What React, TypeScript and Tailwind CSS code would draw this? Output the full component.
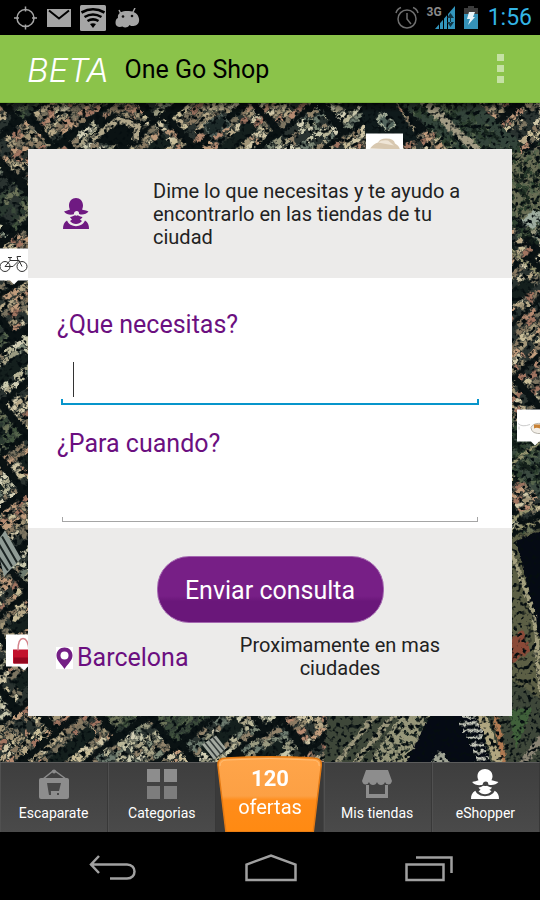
import React from "react";

const LABEL = "text-[25px] leading-[30px] text-[#6b0f80]";

function seeded(seed: number) {
  let s = seed;
  return () => {
    s = (s * 1664525 + 1013904223) % 4294967296;
    return s / 4294967296;
  };
}

const WARM = ["#b8a988", "#a39678", "#c9bd98", "#b58a70", "#c09c7c", "#8a7a62", "#d0c6a6", "#a07460", "#7c7460"];
const PALE = ["#b9b698", "#9a9a80", "#c9c8ac", "#7f8a78", "#a8a286", "#d2ceb4", "#6c7a6e", "#90826a"];
const PARK = ["#3a4a3a", "#56654c", "#2b3a30", "#6c7358", "#44563f"];

type Plot = { x: number; y: number; w: number; h: number; fill: string };
type Block = { x: number; y: number; w: number; h: number; turn: number; court: boolean; plots: Plot[] };

// City blocks: rows of roofs around dark courtyards, split by dark streets.
function buildBlocks(): Block[] {
  const rnd = seeded(41);
  const blocks: Block[] = [];
  for (let by = -480; by < 480; by += 42) {
    let bx = -480 - Math.floor(rnd() * 30);
    while (bx < 480) {
      const w = 32 + Math.floor(rnd() * 50);
      const h = 36;
      const kind = rnd();
      const colors = kind < 0.08 ? PARK : kind < 0.45 ? PALE : WARM;
      const plots: Plot[] = [];
      for (let y = by; y < by + h; y += 6) {
        let x = bx;
        while (x < bx + w) {
          const pw = 4 + Math.floor(rnd() * 8);
          if (rnd() > 0.12) {
            plots.push({ x, y: y + Math.round(rnd()), w: Math.min(pw, bx + w - x), h: 5, fill: colors[Math.floor(rnd() * colors.length)] });
          }
          x += pw + 1;
        }
      }
      blocks.push({ x: bx, y: by, w, h, turn: Math.round((rnd() - 0.5) * 14), court: w > 44 && rnd() > 0.4, plots });
      bx += w + 8;
    }
  }
  return blocks;
}

const BLOCKS = buildBlocks();

function buildTrees() {
  const rnd = seeded(5);
  return Array.from({ length: 640 }, () => ({ t: rnd(), o: rnd(), r: 1 + rnd() * 2, c: Math.floor(rnd() * 4) }));
}
const TREES = buildTrees();
const GREENS = ["#14201a", "#2f4230", "#56654c", "#1d2c22"];

function SatelliteMap() {
  return (
    <svg className="absolute inset-0 h-full w-full" viewBox="0 0 540 660" preserveAspectRatio="xMidYMid slice" aria-hidden="true">
      <defs>
        <filter id="grain" x="0" y="0" width="100%" height="100%" colorInterpolationFilters="sRGB">
          <feTurbulence type="fractalNoise" baseFrequency="0.22" numOctaves="2" seed="8" result="n" />
          <feDisplacementMap in="SourceGraphic" in2="n" scale="7" xChannelSelector="R" yChannelSelector="G" result="d" />
          <feGaussianBlur in="d" stdDeviation="0.4" result="soft" />
          <feColorMatrix in="n" type="matrix" values="0 0 0 0 0.02  0 0 0 0 0.05  0 0 0 0 0.06  4 0 4 0 -4.1" result="dark" />
          <feMerge>
            <feMergeNode in="soft" />
            <feMergeNode in="dark" />
          </feMerge>
        </filter>
        <linearGradient id="topshade" x1="0" y1="0" x2="0" y2="1">
          <stop offset="0" stopColor="#000" stopOpacity="0.6" />
          <stop offset="1" stopColor="#000" stopOpacity="0" />
        </linearGradient>
      </defs>
      <rect width="540" height="660" fill="#0a1213" />
      <g filter="url(#grain)">
        <rect x="-10" y="-10" width="560" height="680" fill="#0a1213" />
        <g transform="translate(270 330) rotate(-38)">
          {BLOCKS.map((b, i) => (
            <g key={i} transform={`rotate(${b.turn} ${b.x + b.w / 2} ${b.y + b.h / 2})`}>
              <rect x={b.x} y={b.y} width={b.w} height={b.h} fill="#2a3330" />
              {b.plots.map((p, j) => (
                <rect key={j} x={p.x} y={p.y} width={p.w} height={p.h} fill={p.fill} />
              ))}
              {b.court && <rect x={b.x + 10} y={b.y + 12} width={b.w - 21} height={b.h - 23} fill="#141f1d" />}
            </g>
          ))}
        </g>
        {/* courtyard building and blank plots along the top */}
        <path d="M84 40 L112 10 L144 20 L142 44 Z" fill="#0a1213" />
        <path d="M92 37 L118 17 L138 24 L134 38" fill="none" stroke="#b0a689" strokeWidth="6" />
        <path d="M358 -4 L392 -4 L420 40 L366 34 Z" fill="#0f1a1b" />
        <path d="M376 16 L384 11 L396 22 L386 28 Z" fill="#52645c" stroke="#a7b09a" strokeWidth="2" />
        <path d="M204 22 L222 12 L230 22 L210 34 Z" fill="#1c2928" stroke="#53605a" strokeWidth="2" />
        {/* boulevard */}
        <path d="M386 -10 L480 68 L520 68 L520 40 L466 -10 Z" fill="#33443a" />
        {TREES.slice(0, 300).map((t, i) => (
          <circle key={i} cx={386 + t.t * 84 + t.o * 64} cy={-14 + t.t * 84} r={t.r} fill={GREENS[t.c]} />
        ))}
        <path d="M416 -8 L492 62" stroke="#a39c84" strokeWidth="8" />
        {/* park on the right edge */}
        <path d="M506 50 L544 50 L544 130 L506 110 Z" fill="#6a6e55" />
        <path d="M506 340 L544 310 L544 400 L506 360 Z" fill="#3b4a40" />
        {TREES.slice(300).map((t, i) => (
          <circle key={i} cx={508 + t.o * 34} cy={t.t < 0.5 ? 40 + t.t * 200 : 240 + t.t * 140} r={t.r} fill={GREENS[t.c]} />
        ))}
        <path d="M520 118 l14 -10 l12 6 l-14 12 Z" fill="#9dab9e" />
        <path d="M506 144 l40 34 M506 366 l38 -30 M506 420 l40 -22 M506 430 l40 -14" stroke="#96946f" strokeWidth="3" />
        {/* harbour */}
        <path d="M508 434 L546 426 L546 670 L506 670 Z" fill="#5c5f45" />
        <path d="M516 438 L546 426 L546 560 Z" fill="#050a14" />
        <path d="M510 446 L534 512 L540 590" fill="none" stroke="#a39f7e" strokeWidth="4" />
        <path d="M506 540 l16 -12 l8 20 l-20 14 Z" fill="#8a4a38" />
        <path d="M322 670 L330 600 L500 570 L546 600 L546 670 Z" fill="#3e4739" />
        <path d="M330 668 L386 600 M348 668 L404 600" stroke="#99957a" strokeWidth="5" />
        <path d="M364 668 L408 600 L440 600 L402 668 Z" fill="#97977a" />
        <path d="M374 660 l36 -50 M384 662 l38 -52 M394 664 l36 -52" stroke="#1a2722" strokeWidth="4" strokeDasharray="4 5" />
        <path d="M402 668 L438 596 L474 596 L492 668 Z" fill="#050a14" />
        <path d="M462 614 h14 M459 621 h20 M463 628 h18 M467 635 h16 M470 642 h15 M473 649 h14 M475 656 h14" stroke="#c6c8ba" strokeWidth="3" />
        <path d="M430 664 l4 -12 l7 -3 l8 10 v6 Z" fill="#a0a494" />
        <path d="M478 606 L502 668" stroke="#b0a680" strokeWidth="9" />
        <path d="M494 606 L506 668" stroke="#b07a52" strokeWidth="5" />
        <path d="M508 606 h24 l-16 40 Z" fill="#40603a" />
        <path d="M516 668 L546 630" stroke="#8a8474" strokeWidth="7" />
      </g>
      {/* corrugated roofs */}
      <path d="M-4 440 L5 428 L21 456 L4 474 Z" fill="#8f9b95" />
      <path d="M-4 450 L8 468 M-2 440 L12 464 M2 434 L17 460" stroke="#1a2322" strokeWidth="2" />
      <path d="M202 642 L216 633 L226 646 L214 657 Z" fill="#a3a9a0" />
      <path d="M205 640 l12 15 M209 637 l12 15 M213 635 l11 13" stroke="#343b3a" strokeWidth="1.5" />
      <rect width="540" height="10" fill="url(#topshade)" />
      {/* shop pins */}
      <g>
        <path d="M366 31 h37 v32 h-37 Z" fill="#fff" />
        <path d="M370 46 q4 -5 8 -6 q2 -4 8 -4 q8 0 9 5 q4 2 5 6 Z" fill="#d8c8b0" />
        <path d="M378 40 q4 -3 10 -2 l6 5" fill="#efe5d6" />
        <path d="M0 146 h34 v32 h-16 l-4 4 -4 -4 h-10 Z" fill="#fff" />
        <g fill="none" stroke="#333" strokeWidth="1">
          <circle cx="5" cy="164" r="5" />
          <circle cx="22" cy="164" r="5" />
          <path d="M5 164 L10 158 H19 L13 164 Z M19 158 L22 164 M8 155 h4 M10 158 v-3 M18 158 l-1 -4 h4" />
        </g>
        <path d="M517 307 h30 v32 h-8 l-4 4 -4 -4 h-14 Z" fill="#fff" />
        <path d="M518 321 q4 4 12 1 M519 324 v3" fill="none" stroke="#ccc" strokeWidth="1" />
        <path d="M531 325 q0 7 12 6 v-10 q-10 -1 -12 4" fill="#f3efe8" stroke="#b9b5ac" strokeWidth="1" />
        <path d="M534 322 h8 v5 q-5 -3 -8 -1 Z" fill="#c98235" />
        <path d="M6 532 h30 v32 h-8 l-4 4 -4 -4 h-14 Z" fill="#fff" />
        <path d="M13 547 h20 v14 h-20 Z" fill="#c3132d" />
        <path d="M14 555 h18 v6 h-18 Z" fill="#94071f" />
        <path d="M18 548 q0 -12 5 -12 t6 12" fill="none" stroke="#d4848c" strokeWidth="1.5" />
      </g>
    </svg>
  );
}

function StatusBar() {
  return (
    <div className="flex h-[35px] items-center justify-between bg-black pl-3.5 pr-2">
      <div className="flex items-center gap-[9px] text-[#a5a5a5]">
        <svg width="24" height="24" viewBox="0 0 24 24" fill="none" stroke="currentColor" strokeWidth="1.5">
          <circle cx="11.5" cy="12" r="8.5" />
          <path d="M11.5 0.5v5M11.5 18.5v5M0 12h5M18 12h5" />
        </svg>
        <svg width="24" height="18" viewBox="0 0 24 18">
          <path d="M0 0h24v18H0z" fill="currentColor" />
          <path d="M2 1.5l10 8 10-8" fill="none" stroke="#000" strokeWidth="2" />
        </svg>
        <svg width="26" height="26" viewBox="0 0 26 26">
          <rect width="26" height="26" rx="1.5" fill="currentColor" />
          <g fill="none" stroke="#000" strokeWidth="2.6">
            <path d="M1.500 7.500q11.500-6.500 23 0M4.500 12q8.500-5 17 0M7.500 16q5.500-3.200 11 0" />
          </g>
          <path d="M10 19q3-1.600 6 0l-3 4z" fill="#000" />
        </svg>
        <svg width="25" height="20" viewBox="0 0 25 20">
          <path d="M4 2l2 4M20 0l-2 4" stroke="currentColor" strokeWidth="1.5" />
          <path d="M3 10C2 5 7 3 12 3s10 1 11.500 6c2 5-1 9-5 9-2 0-3 0-4-1-2 3-5 3-7 1.500-3 1-7 .5-7-3.500 0-3 1-4.500 2.500-5z" fill="currentColor" />
          <circle cx="8" cy="8.500" r="1.300" fill="#111" />
          <circle cx="17" cy="8" r="1.300" fill="#111" />
        </svg>
      </div>
      <div className="flex items-center">
        <svg width="24" height="24" viewBox="0 0 24 24" fill="none" stroke="#6f6f6f" strokeWidth="1.500">
          <circle cx="12" cy="13" r="9" />
          <path d="M12 7v6l4 5M1 7q1-4 5-5.500M23 7q-1-4-5-5.500" />
        </svg>
        <span className="ml-2 mb-3 font-['Roboto'] text-[12px] leading-[12px] font-bold text-[#8a8a8a]">3G</span>
        <svg className="-ml-2" width="22" height="23" viewBox="0 0 22 23">
          <path d="M1 23L21 0v23z" fill="#3295bd" />
          <path d="M5.500 14v9M9.500 10v13M13.500 6v17" stroke="#000" strokeWidth="1" />
          <path d="M16.500 7l3.500 5h-7zM16.500 21l3.500-5h-7zM16 11h1v6h-1z" fill="#123645" />
        </svg>
        <svg className="ml-2" width="14" height="23" viewBox="0 0 14 23">
          <path d="M4 0h6v2h4v6H0V2h4z" fill="#3c3c3c" />
          <path d="M0 8h14v15H0z" fill="#3592b8" />
          <path d="M5 6h6L9 11h2l-7 8 2-6H3z" fill="#e8f4f9" />
        </svg>
        <span className="ml-2.5 text-[23px] leading-[30px] text-[#33b5e5]">1:56</span>
      </div>
    </div>
  );
}

function ShopperIcon({ className }: { className: string }) {
  return (
    <svg className={className} viewBox="0 0 26 31" preserveAspectRatio="none" fill="currentColor" aria-hidden="true">
      <path d="M6 7.500C6 3 9 0 13 0s7 3 7 7.500c0 1.500-.5 3-1 4 1.500.5 4 1 6.500 2-2 2.500-6 4-9.500 2.500.5-3-2.500-4-4.500-2-1 1.500 0 2.500-1.500 2.500C7 17 3 16.500 1 13.500c2.500-1 4-1 6-2-.6-1-1-2.500-1-4z" />
      <path d="M7 19c2-.2 3.500-1.500 5-1.800 1 .6 2 .6 2.800 0 1.200.5 2.700 1.500 4.700 1.800-.5 1.200-1.500 2-2.500 2.400l2 1.600c-3 4-9 4-12 0l2-1.600C8.500 21 7.500 20.200 7 19z" />
      <path d="M0 31c0-4 1-6.500 4-8.500 3 7.500 15 7.500 18 0 3 2 4 4.500 4 8.500z" />
    </svg>
  );
}

function Tab({ label, active, children }: { label: string; active?: boolean; children: React.ReactNode }) {
  return (
    <button
      type="button"
      className="flex flex-1 basis-0 flex-col items-center gap-0.5 border-r border-t border-r-[#383838] border-t-[#5c5c5c] bg-linear-to-b from-[#3e3e3e] to-[#4a4a4a] pt-1 shadow-[inset_1px_0_0_#505050]"
    >
      <span className={active ? "flex h-8 items-center pt-0.5 text-white" : "flex h-8 items-center pt-0.5 text-[#8d8d8d]"}>{children}</span>
      <span className="text-[14px] leading-[24px] whitespace-nowrap text-white">{label}</span>
    </button>
  );
}

export default function App() {
  return (
    <div className="flex min-h-screen flex-col bg-black font-['Roboto','Liberation_Sans',sans-serif]">
      <StatusBar />
      <header className="flex h-[68px] items-center justify-between border-b border-[#7ab03c] bg-[#8bc34a] pl-[27px] pr-9">
        <h1 className="flex items-center gap-4 pt-0.5 text-[25px] leading-[34px] text-black">
          <span className="font-['Inter'] text-[33px] font-light text-white italic">BETA</span>
          One Go Shop
        </h1>
        <button type="button" aria-label="Más opciones" className="flex flex-col gap-1">
          <span className="size-[7px] bg-[#c5e1a4]" />
          <span className="size-[7px] bg-[#c5e1a4]" />
          <span className="size-[7px] bg-[#c5e1a4]" />
        </button>
      </header>

      <main className="relative flex flex-1 flex-col overflow-hidden px-7 pt-[46px] pb-[46px]">
        <SatelliteMap />
        <form className="relative flex flex-1 flex-col" onSubmit={(e) => e.preventDefault()}>
          <div className="flex h-[129px] items-center bg-[#ecebea] pr-7 pl-[35px]">
            <ShopperIcon className="h-[31px] w-[26px] shrink-0 text-[#6f1a82]" />
            <p className="ml-16 pt-0.5 text-[20px] leading-[23px] text-[#222]">
              Dime lo que necesitas y te ayudo a encontrarlo en las tiendas de tu ciudad
            </p>
          </div>
          <div className="flex h-[250px] flex-col bg-white px-[29px] pt-8">
            <label htmlFor="need" className={LABEL}>
              ¿Que necesitas?
            </label>
            <div className="relative mx-1 mt-[22px] mb-6">
              <input id="need" type="text" className="block h-[38px] w-full bg-transparent px-3 text-[25px] caret-transparent outline-none" />
              <span className="absolute top-0 left-3 h-[35px] w-px bg-[#333]" />
              <div className="-mt-px h-1.5 border-x-2 border-b-2 border-[#0795cb]" />
            </div>
            <label htmlFor="when" className={LABEL}>
              ¿Para cuando?
            </label>
            <div className="mx-[5px] mt-[22px]">
              <input id="when" type="text" className="block h-[38px] w-full bg-transparent px-3 text-[25px] outline-none" />
              <div className="-mt-0.5 h-[5px] border-x border-b border-[#a5a5a5]" />
            </div>
          </div>
          <div className="flex flex-1 flex-col items-center bg-[#ecebea] px-7 pt-7">
            <button
              type="submit"
              className="h-[67px] w-[227px] rounded-[32px] border border-[#a468b0] bg-linear-to-b from-[#771f86] from-60% to-[#6a177a] to-68% pt-0.5 text-[25px] text-white"
            >
              Enviar consulta
            </button>
            <div className="mt-2.5 flex w-full items-start">
              <p className="mt-2 flex flex-1 basis-0 items-center gap-1 text-[25px] leading-[34px] text-[#6b0f80]">
                <svg width="17" height="22" viewBox="0 0 17 22" aria-hidden="true">
                  <path d="M0 0h17v22H0z" fill="#fff" />
                  <path d="M8.500 0.500C4 .5.500 4 .500 8.500c0 5 4.500 8 8 13.500 3.500-5.500 8-8.500 8-13.500C16.500 4 13 .5 8.500.5z" fill="#741f85" />
                  <circle cx="8.500" cy="8.500" r="4" fill="#fff" />
                </svg>
                Barcelona
              </p>
              <p className="w-[228px] pt-px text-center text-[20px] leading-[23px] text-[#222]">Proximamente en mas ciudades</p>
              <span className="w-[30px]" />
            </div>
          </div>
        </form>
      </main>

      <nav className="flex h-[70px] shrink-0 bg-[#444]">
        <Tab label="Escaparate">
          <svg width="30" height="30" viewBox="0 0 30 30">
            <path d="M4 10L14 2h2l11 8" fill="none" stroke="currentColor" strokeWidth="1.500" />
            <circle cx="15" cy="2.500" r="2" fill="currentColor" />
            <rect x="0" y="9" width="30" height="21" rx="2" fill="currentColor" />
            <path d="M9 14h13l-2 8h-9z" fill="#484848" />
            <path d="M8 14h2l2 9v3h-2zM18 24h2v2h-2z" fill="#484848" />
          </svg>
        </Tab>
        <Tab label="Categorias">
          <span className="grid grid-cols-2 gap-1">
            <span className="size-[13px] bg-[#8d8d8d]" />
            <span className="size-[13px] bg-[#8d8d8d]" />
            <span className="size-[13px] bg-[#7d7d7d]" />
            <span className="size-[13px] bg-[#7d7d7d]" />
          </span>
        </Tab>
        <button type="button" className="relative -mt-[6px] flex flex-1 basis-0 flex-col items-center pt-2 text-white">
          <svg className="absolute inset-0 h-full w-full" viewBox="0 0 108 76" preserveAspectRatio="none" aria-hidden="true">
            <defs>
              <linearGradient id="orange" x1="0" y1="0" x2="0" y2="1">
                <stop offset="0" stopColor="#ffa54a" />
                <stop offset="0.520" stopColor="#fca044" />
                <stop offset="0.580" stopColor="#ff8c1a" />
                <stop offset="1" stopColor="#ff8a12" />
              </linearGradient>
            </defs>
            <path d="M0 6h108v70H0z" fill="#3a3a3a" />
            <path d="M2 10Q1 2 10 2Q54-.5 98 2Q107 2 106 10L98 76H10z" fill="url(#orange)" stroke="#e47a14" strokeWidth="1.500" />
            <path d="M4 10Q4 4 11 4Q54 1 97 4Q104 4 104 10" fill="none" stroke="#ffbd73" strokeWidth="1" />
          </svg>
          <span className="relative pt-px text-[22px] leading-[28px] font-bold">120</span>
          <span className="relative text-[20px] leading-[28px]">ofertas</span>
        </button>
        <Tab label="Mis tiendas">
          <svg width="30" height="28" viewBox="0 0 30 28" fill="currentColor">
            <path d="M4 0h22l4 11q-1 3.500-3.500 3.500T23 12q-1 3-4 3t-4-3q-1 3-4 3t-4-3q-1 2.500-3.500 2.500T0 11z" />
            <path d="M4 15h3v9h16v-9h3v13H4z" />
          </svg>
        </Tab>
        <Tab label="eShopper" active>
          <ShopperIcon className="h-[30px] w-7" />
        </Tab>
      </nav>

      <div className="flex h-[68px] shrink-0 items-center justify-between bg-black pt-1 pr-[87px] pl-[89px] text-[#a0a0a0]">
        <button type="button" aria-label="Atrás">
          <svg className="block" width="48" height="28" viewBox="0 0 48 28" fill="none" stroke="currentColor" strokeWidth="2.500">
            <path d="M10 2L2 10.500l8 8.500M2 10.500h36c10 0 10 14 0 14H21" />
          </svg>
        </button>
        <button type="button" aria-label="Inicio">
          <svg className="block" width="52" height="28" viewBox="0 0 52 28" fill="none" stroke="currentColor" strokeWidth="2.500">
            <path d="M1.500 26V10.500L26 1.500l24.500 9V26z" />
          </svg>
        </button>
        <button type="button" aria-label="Recientes">
          <svg className="block" width="48" height="28" viewBox="0 0 48 28" fill="none" stroke="currentColor" strokeWidth="2.500">
            <path d="M1.500 10.500h37V26h-37zM11 3.500h35.500V19" />
          </svg>
        </button>
      </div>
    </div>
  );
}
